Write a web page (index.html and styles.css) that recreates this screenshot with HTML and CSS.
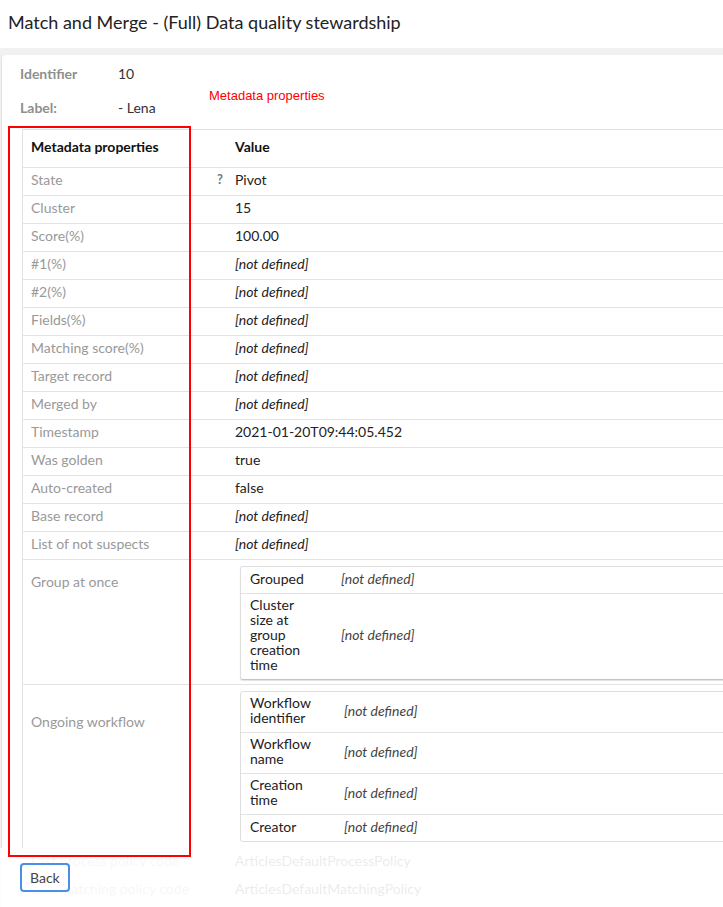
FILE: index.html
```html
<!DOCTYPE html>
<html lang="en">
<head>
<meta charset="utf-8">
<title>Match and Merge - (Full) Data quality stewardship</title>
<link rel="stylesheet" href="styles.css">
</head>
<body>
<header class="page-head">
  <h1 class="page-title">Match and Merge - (Full) Data quality stewardship</h1>
</header>

<main class="card">
  <div class="summary">
    <dl class="ident">
      <dt>Identifier</dt><dd>10</dd>
      <dt>Label:</dt><dd>- Lena</dd>
    </dl>
    <span class="note">Metadata properties</span>
  </div>

  <div class="props-wrap">
    <table class="props">
      <colgroup>
        <col class="col-name">
        <col class="col-help">
        <col class="col-value">
      </colgroup>
      <thead>
        <tr><th>Metadata properties</th><th></th><th>Value</th></tr>
      </thead>
      <tbody>
        <tr><td class="name">State</td><td class="help">?</td><td class="value">Pivot</td></tr>
        <tr><td class="name">Cluster</td><td class="help"></td><td class="value">15</td></tr>
        <tr><td class="name">Score(%)</td><td class="help"></td><td class="value">100.00</td></tr>
        <tr><td class="name">#1(%)</td><td class="help"></td><td class="value undef">[not defined]</td></tr>
        <tr><td class="name">#2(%)</td><td class="help"></td><td class="value undef">[not defined]</td></tr>
        <tr><td class="name">Fields(%)</td><td class="help"></td><td class="value undef">[not defined]</td></tr>
        <tr><td class="name">Matching score(%)</td><td class="help"></td><td class="value undef">[not defined]</td></tr>
        <tr><td class="name">Target record</td><td class="help"></td><td class="value undef">[not defined]</td></tr>
        <tr><td class="name">Merged by</td><td class="help"></td><td class="value undef">[not defined]</td></tr>
        <tr><td class="name">Timestamp</td><td class="help"></td><td class="value">2021-01-20T09:44:05.452</td></tr>
        <tr><td class="name">Was golden</td><td class="help"></td><td class="value">true</td></tr>
        <tr><td class="name">Auto-created</td><td class="help"></td><td class="value">false</td></tr>
        <tr><td class="name">Base record</td><td class="help"></td><td class="value undef">[not defined]</td></tr>
        <tr><td class="name">List of not suspects</td><td class="help"></td><td class="value undef">[not defined]</td></tr>
        <tr class="group-row">
          <td class="name name-group">Group at once</td><td class="help"></td>
          <td class="value nested-cell">
            <table class="sub sub-group">
              <tr><td class="sub-name">Grouped</td><td class="sub-value">[not defined]</td></tr>
              <tr><td class="sub-name">Cluster size at group creation time</td><td class="sub-value">[not defined]</td></tr>
            </table>
          </td>
        </tr>
        <tr class="group-row">
          <td class="name name-workflow">Ongoing workflow</td><td class="help"></td>
          <td class="value nested-cell nested-cell-last">
            <table class="sub sub-workflow">
              <tr><td class="sub-name">Workflow identifier</td><td class="sub-value">[not defined]</td></tr>
              <tr><td class="sub-name">Workflow name</td><td class="sub-value">[not defined]</td></tr>
              <tr><td class="sub-name">Creation time</td><td class="sub-value">[not defined]</td></tr>
              <tr><td class="sub-name">Creator</td><td class="sub-value">[not defined]</td></tr>
            </table>
          </td>
        </tr>
        <tr><td class="name">Last process policy code</td><td class="help"></td><td class="value">ArticlesDefaultProcessPolicy</td></tr>
        <tr><td class="name">Last matching policy code</td><td class="help"></td><td class="value">ArticlesDefaultMatchingPolicy</td></tr>
      </tbody>
    </table>
  </div>
</main>

<footer class="actions">
  <button class="btn" type="button">Back</button>
</footer>

<div class="highlight" aria-hidden="true"></div>
</body>
</html>
```

FILE: styles.css
```css
html, body {
  margin: 0;
  padding: 0;
}

body {
  background: #f1f1f1;
  font-family: Lato, "Open Sans", Arial, sans-serif;
  font-size: 14px;
  color: #222;
  width: 723px;
  height: 907px;
  overflow: hidden;
  position: relative;
}

/* ---- page heading ---- */
.page-head {
  background: #fff;
  height: 48px;
  box-sizing: border-box;
  padding: 11px 8px 0;
}

.page-title {
  margin: 0;
  font-size: 18px;
  font-weight: 400;
  line-height: 22px;
  color: #222;
}

/* ---- content card ---- */
.card {
  margin: 7px 0 0 1px;
  width: 780px;
  background: #fff;
  border-left: 1px solid #e2e2e2;
  border-top-left-radius: 4px;
  padding-top: 10px;
  min-height: 900px;
}

.summary {
  display: flex;
  padding-left: 18px;
}

.ident {
  display: grid;
  grid-template-columns: 98px auto;
  row-gap: 17px;
  margin: 0;
  line-height: 17px;
  width: 189px;
}

.ident dt {
  color: #8f8f8f;
  font-weight: 700;
}

.ident dd {
  margin: 0;
  color: #333;
}

.note {
  margin-top: 23px;
  font-family: "Liberation Sans", Arial, sans-serif;
  font-size: 13px;
  line-height: 16px;
  color: #f00;
  align-self: flex-start;
}

/* ---- properties table ---- */
.props-wrap {
  margin: 13px 0 0 20px;
  border-left: 1px solid #e3e3e3;
  border-top: 1px solid #e3e3e3;
}

.props {
  width: 100%;
  border-collapse: separate;
  border-spacing: 0;
  table-layout: fixed;
}

.col-name { width: 184px; }
.col-help { width: 22px; }

.props th {
  text-align: left;
  font-weight: 700;
  color: #111;
  line-height: 17px;
  padding: 8px 6px 12px;
  border-bottom: 1px solid #e3e3e3;
}

.props th:first-child { padding-left: 8px; }

.props td {
  line-height: 17px;
  padding: 3px 6px 7px;
  border-bottom: 1px solid #e3e3e3;
  vertical-align: top;
}

.props td.name {
  padding-left: 8px;
  color: #999;
}

.props td.help {
  text-align: right;
  font-weight: 700;
  font-size: 13px;
  color: #777;
}

.props td.value { color: #222; }

.undef {
  font-style: italic;
  color: #444;
}

.props td.name-group { padding-top: 13px; }
.props td.name-workflow { padding-top: 28px; }

.props td.nested-cell {
  padding: 6px 0 4px 11px;
}

.props td.nested-cell-last {
  padding-bottom: 6px;
}

/* ---- nested property tables ---- */
.sub {
  width: 100%;
  border-collapse: separate;
  border-spacing: 0;
  border: 1px solid #dedede;
  border-radius: 3px;
}

.sub-group {
  border-bottom-color: #c4c4c4;
  box-shadow: 0 1px 1px rgba(0, 0, 0, 0.12);
}

.sub td {
  line-height: 15px;
  height: 16px;
  padding: 3px 6px 7px 9px;
  border-bottom: 1px solid #e3e3e3;
  vertical-align: middle;
}

.sub tr:last-child td { border-bottom: 0; }

.sub-name {
  color: #222;
  width: 66px;
  padding-right: 16px !important;
}

.sub-workflow .sub-name {
  width: 69px;
}

.sub-value {
  font-style: italic;
  color: #444;
}

/* ---- footer bar floating over the end of the list ---- */
.actions {
  position: absolute;
  left: 0;
  right: 0;
  bottom: 0;
  height: 59px;
  box-sizing: border-box;
  padding: 15px 0 0 20px;
  background: rgba(255, 255, 255, 0.91);
}

.btn {
  height: 29px;
  padding: 0 8px;
  background: #fff;
  border: 2px solid #4a8ee6;
  border-radius: 4px;
  font-family: Lato, "Open Sans", Arial, sans-serif;
  font-size: 14px;
  color: #444;
  line-height: 25px;
}

/* ---- red outline drawn over the name column ---- */
.highlight {
  position: absolute;
  left: 8px;
  top: 126px;
  width: 179px;
  height: 727px;
  border: 2px solid #f00;
  pointer-events: none;
}
```
